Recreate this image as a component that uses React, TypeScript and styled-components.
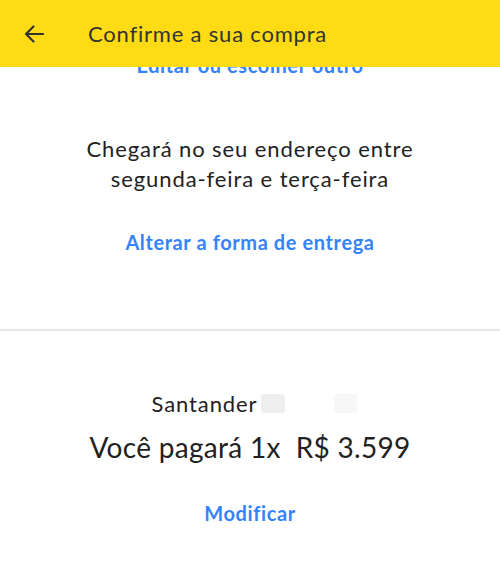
import React from "react";
import styled, { createGlobalStyle } from "styled-components";

const GlobalStyle = createGlobalStyle`
  html, body {
    margin: 0;
    padding: 0;
    background: #ffffff;
  }
  body {
    font-family: Lato, "Open Sans", "Noto Sans", sans-serif;
    color: #222222;
    -webkit-font-smoothing: antialiased;
  }
`;

const Page = styled.div`
  width: 500px;
  height: 581px;
  overflow: hidden;
  display: flex;
  flex-direction: column;
  background: #ffffff;
`;

const Header = styled.header`
  position: relative;
  z-index: 2;
  flex: none;
  height: 67px;
  background: #ffdb15;
  display: flex;
  align-items: center;
  padding: 0 0 0 23px;
  box-sizing: border-box;
`;

const BackButton = styled.button`
  width: 22px;
  height: 22px;
  padding: 0;
  border: none;
  background: transparent;
  display: flex;
  align-items: center;
  justify-content: center;
  color: #333333;
`;

const Title = styled.h1`
  margin: 0 0 0 43px;
  font-size: 22px;
  font-weight: 400;
  color: #333333;
  letter-spacing: 0.8px;
`;

const Section = styled.section<{ $pad: string }>`
  display: flex;
  flex-direction: column;
  align-items: center;
  padding: ${(p) => p.$pad};
`;

// link left from the previous block, scrolled under the header
const HiddenLinkRow = styled.div`
  margin-top: -14px;
  height: 24px;
  display: flex;
  justify-content: center;
`;

const Link = styled.a`
  color: #3483fa;
  font-size: 20px;
  line-height: 24px;
  font-weight: 700;
  letter-spacing: 0.6px;
  text-decoration: none;
  cursor: pointer;
`;

const Delivery = styled.p`
  margin: 0;
  font-size: 22px;
  line-height: 30px;
  letter-spacing: 0.9px;
  text-align: center;
  color: #222222;
`;

const Divider = styled.hr`
  width: 100%;
  margin: 0;
  border: none;
  height: 2px;
  background: #e6e6e6;
`;

const BankRow = styled.div`
  display: flex;
  align-items: center;
  padding-left: 9px;
  font-size: 22px;
  letter-spacing: 0.9px;
  color: #222222;
`;

const Masked = styled.span<{ $w: number; $tone: string; $left: number }>`
  display: inline-block;
  width: ${(p) => p.$w}px;
  height: 19px;
  margin-left: ${(p) => p.$left}px;
  border-radius: 3px;
  background: ${(p) => p.$tone};
  filter: blur(0.6px);
`;

const Amount = styled.p`
  margin: 0;
  font-size: 28px;
  color: #222222;
  letter-spacing: 0.3px;
  white-space: pre;
`;

const App: React.FC = () => {
  return (
    <Page>
      <GlobalStyle />
      <Header>
        <BackButton aria-label="Voltar">
          <svg width="20" height="18" viewBox="0 0 20 18" fill="none">
            <path
              d="M19 9H2M9.5 1.5L2 9l7.5 7.5"
              stroke="#333333"
              strokeWidth="2.2"
              strokeLinecap="round"
              strokeLinejoin="round"
            />
          </svg>
        </BackButton>
        <Title>Confirme a sua compra</Title>
      </Header>

      <HiddenLinkRow>
        <Link>Editar ou escolher outro</Link>
      </HiddenLinkRow>

      <Section $pad="57px 0 0">
        <Delivery>
          Chegará no seu endereço entre
          <br />
          segunda-feira e terça-feira
        </Delivery>
      </Section>
      <Section $pad="36px 0 75px">
        <Link>Alterar a forma de entrega</Link>
      </Section>

      <Divider />

      <Section $pad="59px 0 0">
        <BankRow>
          Santander
          <Masked $w={24} $tone="#eeeeee" $left={4} />
          <Masked $w={23} $tone="#f7f7f7" $left={49} />
        </BankRow>
      </Section>
      <Section $pad="13px 0 0">
        <Amount>Você pagará 1x  R$ 3.599</Amount>
      </Section>
      <Section $pad="37px 0 0">
        <Link>Modificar</Link>
      </Section>
    </Page>
  );
};

export default App;
